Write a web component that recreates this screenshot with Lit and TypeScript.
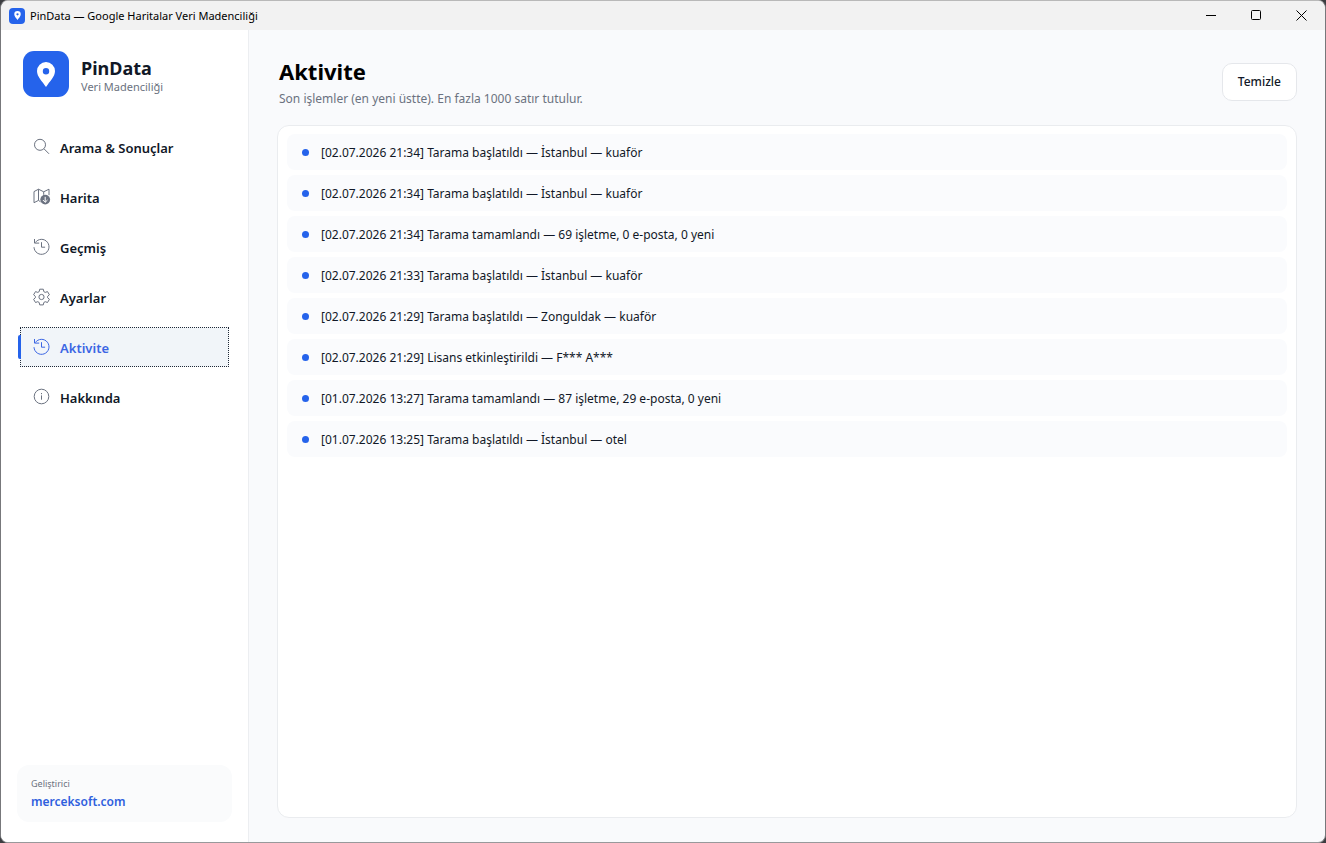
import { LitElement, html, css, svg, nothing } from "lit";
import { customElement, state } from "lit/decorators.js";

const icons = {
  search: svg`<circle cx="7" cy="6.800" r="5.500"/><path d="M11 10.800l5 5"/>`,
  map: svg`<path d="M7.500 13.800l-2-1.400-4.500 2.300V3.600l4.500-2.400 5.200 2.600 5.300-2.600v6M5.500 1.200v11.200M10.700 3.800v3"/>
    <circle cx="12.200" cy="11.600" r="4.900" fill="currentColor" stroke="none"/>
    <path d="M12.200 8.800v5.400M9.900 12l2.300 2.300 2.300-2.300" stroke="#fff"/>`,
  history: svg`<path d="M2.300 4.600A7.500 7.500 0 1 1 1 9.200M1.500 1v4.100h4.700M8.500 4.200v5h3.600"/>`,
  gear: svg`<circle cx="8.500" cy="9" r="2.600"/>
    <path d="M6.700 1.200h3.600l.5 2.400 1.400.8 2.300-.8 1.900 3.200-1.800 1.600v1.300l1.800 1.600-1.900 3.200-2.300-.8-1.400.8-.5 2.400H6.700l-.5-2.400-1.400-.8-2.300.8L.6 11.300l1.800-1.600V8.400L.6 6.800l1.900-3.200 2.300.8 1.400-.8z" stroke-linejoin="round"/>`,
  info: svg`<circle cx="8.500" cy="8.500" r="7.300"/><path d="M8.500 7.400v4.300M8.500 5v1.200"/>`,
};

const navItems: { label: string; icon: keyof typeof icons }[] = [
  { label: "Arama & Sonuçlar", icon: "search" },
  { label: "Harita", icon: "map" },
  { label: "Geçmiş", icon: "history" },
  { label: "Ayarlar", icon: "gear" },
  { label: "Aktivite", icon: "history" },
  { label: "Hakkında", icon: "info" },
];

const pin = html`<svg class="pin" viewBox="0 0 18 25" aria-hidden="true">
  <path fill="#fff" fill-rule="evenodd" d="M9 0a9 9 0 0 0-9 9c0 5.800 5.200 10.200 9 16 3.800-5.800 9-10.200 9-16a9 9 0 0 0-9-9zm0 6a3.200 3.200 0 1 1 0 6.400A3.200 3.200 0 0 1 9 6z"/>
</svg>`;

@customElement("app-root")
export class AppRoot extends LitElement {
  @state() private active = "Aktivite";
  @state() private entries = [
    "[02.07.2026 21:34] Tarama başlatıldı — İstanbul — kuaför",
    "[02.07.2026 21:34] Tarama başlatıldı — İstanbul — kuaför",
    "[02.07.2026 21:34] Tarama tamamlandı — 69 işletme, 0 e-posta, 0 yeni",
    "[02.07.2026 21:33] Tarama başlatıldı — İstanbul — kuaför",
    "[02.07.2026 21:29] Tarama başlatıldı — Zonguldak — kuaför",
    "[02.07.2026 21:29] Lisans etkinleştirildi — F*** A***",
    "[01.07.2026 13:27] Tarama tamamlandı — 87 işletme, 29 e-posta, 0 yeni",
    "[01.07.2026 13:25] Tarama başlatıldı — İstanbul — otel",
  ];

  static styles = css`
    :host {
      display: block;
      height: 100vh;
      background: #3c3d40;
      font-family: "Noto Sans", "Open Sans", sans-serif;
      font-size: 12px;
      color: #111827;
    }
    * { box-sizing: border-box; }
    h1, h2, p, ul { margin: 0; padding: 0; }
    ul { list-style: none; }
    button { font: inherit; color: inherit; border: 0; background: none; padding: 0; }
    .window {
      height: 100%;
      display: flex;
      flex-direction: column;
      border: 1px solid #77787b;
      border-top-color: #b9b9b9;
      border-bottom-color: #98999b;
      border-radius: 8px;
      overflow: hidden;
      background: #f9fafc;
    }
    .titlebar {
      flex: none;
      display: flex;
      align-items: center;
      height: 29px;
      padding: 0 1px 0 8px;
      background: #f2f2f2;
      color: #000;
      font-size: 11px;
    }
    .mark { display: grid; place-items: center; background: #2563eb; flex: none; }
    .mark.small { width: 16px; height: 16px; border-radius: 4px; margin-right: 5px; }
    .mark.small .pin { width: 7px; height: 9px; }
    .mark.large { width: 46px; height: 46px; border-radius: 11px; }
    .mark.large .pin { width: 18px; height: 25px; }
    .caption { flex: 1; white-space: nowrap; }
    .controls { display: flex; height: 100%; }
    .controls button { width: 45px; display: grid; place-items: center; }
    .controls svg { width: 11px; height: 11px; fill: none; stroke: #000; }
    .body { flex: 1; display: flex; min-height: 0; }
    .sidebar {
      flex: none;
      width: 248px;
      display: flex;
      flex-direction: column;
      padding: 21px 16px 20px;
      background: #fff;
      border-right: 1px solid #eceef1;
    }
    .brand { display: flex; align-items: center; gap: 12px; padding-left: 6px; }
    .brand h2 { font-size: 18px; line-height: 26px; font-weight: 700; }
    .brand p { font-size: 11px; line-height: 12px; color: #6b7280; }
    .nav { display: flex; flex-direction: column; gap: 10px; padding: 30px 3px 0; }
    .item {
      position: relative;
      display: flex;
      align-items: center;
      gap: 9px;
      height: 40px;
      padding-left: 12px;
      border: 1px solid transparent;
      font-size: 13px;
      font-weight: 600;
      text-align: left;
    }
    .item span { padding-top: 2px; }
    .item svg {
      width: 18px;
      height: 18px;
      fill: none;
      stroke: currentColor;
      color: #6b7280;
    }
    .item.on { background: #f1f5f9; border: 1px dotted #1f2937; color: #3b66e4; }
    .item.on svg { color: #3b66e4; }
    .item.on::before {
      content: "";
      position: absolute;
      left: -3px;
      top: 7px;
      width: 3px;
      height: 24px;
      border-radius: 2px 0 0 2px;
      background: #2563eb;
    }
    .dev { margin-top: auto; padding: 11px 14px 10px; border-radius: 12px; background: #fafbfc; }
    .dev p { font-size: 9px; line-height: 16px; color: #6b7280; }
    .dev a {
      display: block;
      font-size: 12px;
      line-height: 20px;
      font-weight: 600;
      color: #2f5fde;
      text-decoration: none;
    }
    .main {
      flex: 1;
      min-width: 0;
      display: flex;
      flex-direction: column;
      padding: 26px 28px 24px;
    }
    .head { display: flex; align-items: center; justify-content: space-between; margin-bottom: 18px; }
    .titles { display: flex; flex-direction: column; gap: 5px; padding-left: 2px; }
    .titles h1 { font-size: 22px; line-height: 30px; font-weight: 700; color: #000; }
    .titles p { font-size: 12px; line-height: 16px; color: #6b7280; }
    .clear {
      height: 38px;
      padding: 0 15px;
      border: 1px solid #e5e7eb;
      border-radius: 10px;
      background: #fff;
      font-weight: 500;
    }
    .card {
      flex: 1;
      min-height: 0;
      overflow: hidden;
      padding: 8px 9px;
      border: 1px solid #eaecef;
      border-radius: 12px;
      background: #fff;
    }
    .list { display: flex; flex-direction: column; gap: 5px; }
    .row {
      display: flex;
      align-items: center;
      gap: 12px;
      height: 36px;
      padding: 0 15px;
      border-radius: 8px;
      background: #fafbfd;
    }
    .dot { flex: none; width: 7px; height: 7px; border-radius: 50%; background: #2563eb; }
  `;

  render() {
    return html`
      <div class="window">
        <header class="titlebar">
          <span class="mark small">${pin}</span>
          <span class="caption">PinData — Google Haritalar Veri Madenciliği</span>
          <div class="controls">
            <button aria-label="Simge durumuna küçült"><svg viewBox="0 0 11 11"><path d="M0 5.500h10"/></svg></button>
            <button aria-label="Ekranı kapla"><svg viewBox="0 0 11 11"><rect x=".5" y=".5" width="9" height="9" rx="1"/></svg></button>
            <button aria-label="Kapat"><svg viewBox="0 0 11 11"><path d="M.5.5l10 10M10.500.5l-10 10"/></svg></button>
          </div>
        </header>
        <div class="body">
          <aside class="sidebar">
            <div class="brand">
              <span class="mark large">${pin}</span>
              <div><h2>PinData</h2><p>Veri Madenciliği</p></div>
            </div>
            <nav class="nav">
              ${navItems.map(
                (n) => html`<button
                  class="item ${n.label === this.active ? "on" : ""}"
                  aria-current=${n.label === this.active ? "page" : nothing}
                  @click=${() => (this.active = n.label)}
                ><svg viewBox="0 0 18 18" aria-hidden="true">${icons[n.icon]}</svg><span>${n.label}</span></button>`
              )}
            </nav>
            <div class="dev">
              <p>Geliştirici</p>
              <a href="#">merceksoft.com</a>
            </div>
          </aside>
          <main class="main">
            <div class="head">
              <div class="titles">
                <h1>Aktivite</h1>
                <p>Son işlemler (en yeni üstte). En fazla 1000 satır tutulur.</p>
              </div>
              <button class="clear" @click=${() => (this.entries = [])}>Temizle</button>
            </div>
            <section class="card">
              <ul class="list">
                ${this.entries.map((e) => html`<li class="row"><span class="dot"></span><span>${e}</span></li>`)}
              </ul>
            </section>
          </main>
        </div>
      </div>
    `;
  }
}
